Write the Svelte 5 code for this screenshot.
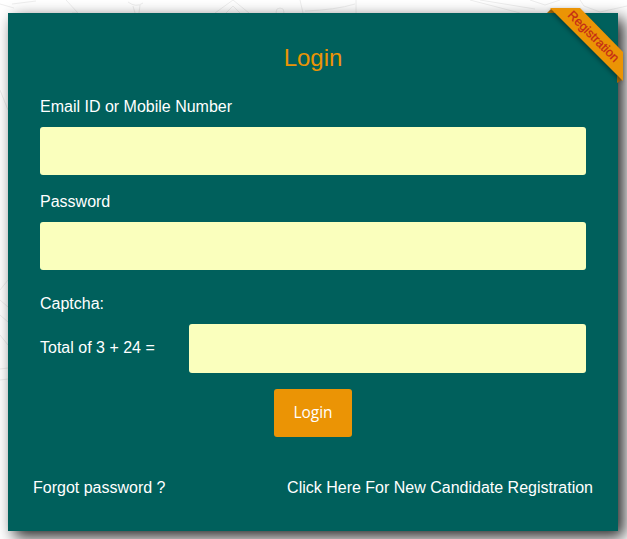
<script>
  let login = '';
  let password = '';
  let captcha = '';
</script>

<div class="page">
  <svg class="doodles" width="627" height="539" viewBox="0 0 627 539" fill="none" stroke="#eeeeee" aria-hidden="true">
    <path d="M0 4 L14 8 M12 4 L36 1 M66 0 L78 13 L72 13" />
    <path d="M128 2 Q136 8 143 3 M133 6 L135 13 M140 5 L139 13" />
    <path d="M215 13 L233 0 L249 13 M226 13 L233 6 L240 13" />
    <circle cx="280" cy="12" r="4" />
    <path d="M300 0 L303 13 M305 11 Q335 10 355 4 M356 0 L356 13" />
    <path d="M470 0 L520 13 M480 0 L535 9 M530 0 L545 5 L560 0" />
    <path d="M580 0 L584 6 L600 12 L627 6" />
    <path d="M0 290 L8 280 M0 300 L8 307 M0 315 L8 322 M0 335 L8 345 M0 369 L8 368 M0 380 L8 379" />
    <path d="M0 90 L8 110" />
  </svg>

  <form class="card" on:submit|preventDefault>
    <svg class="ribbon" width="76" height="76" viewBox="0 0 76 76" aria-hidden="true">
      <polygon points="0,5 5,0 8,5" fill="#a66a08" />
      <polygon points="70,67 75,72 70,75" fill="#a66a08" />
      <polygon class="band" points="3,0 33,0 76,44 76,73" fill="#eb9405" />
      <text x="46" y="29" transform="rotate(45 46 29)" text-anchor="middle" dominant-baseline="middle">Registration</text>
    </svg>

    <h1>Login</h1>

    <label for="login">Email ID or Mobile Number</label>
    <input id="login" type="text" bind:value={login} />

    <label for="password">Password</label>
    <input id="password" type="password" bind:value={password} />

    <label class="captcha-label" for="captcha">Captcha:</label>
    <div class="captcha-row">
      <span>Total of 3 + 24 =</span>
      <input id="captcha" type="text" bind:value={captcha} />
    </div>

    <button type="submit">Login</button>

    <div class="links">
      <a href="#forgot">Forgot password ?</a>
      <a href="#register">Click Here For New Candidate Registration</a>
    </div>
  </form>
</div>

<style>
  :global(body) {
    background: #fff;
    font-family: "Liberation Sans", Arial, sans-serif;
  }

  .page {
    position: relative;
    width: 627px;
    height: 539px;
    overflow: hidden;
    padding: 13px 9px 0 8px;
    box-sizing: border-box;
  }

  .doodles {
    position: absolute;
    top: 0;
    left: 0;
  }

  .card {
    position: relative;
    display: flex;
    flex-direction: column;
    height: 518px;
    box-sizing: border-box;
    padding: 0 32px;
    background: #00605c;
    color: #fff;
    font-size: 16px;
    box-shadow: 6px 6px 15px rgba(0, 0, 0, 0.85);
  }

  .ribbon {
    position: absolute;
    top: -5px;
    right: -5px;
    overflow: visible;
  }

  .band {
    filter: drop-shadow(-1px 2px 2px rgba(0, 0, 0, 0.35));
  }

  .ribbon text {
    font-size: 12.5px;
    fill: #c42a17;
    stroke: #c42a17;
    stroke-width: 0.25px;
  }

  h1 {
    margin: 30px 0 0;
    height: 30px;
    font-size: 24px;
    font-weight: 400;
    line-height: 30px;
    text-align: center;
    color: #eb9405;
  }

  label {
    display: block;
    height: 18px;
    line-height: 18px;
  }

  label[for="login"] {
    margin-top: 25px;
    margin-bottom: 11px;
  }

  label[for="password"] {
    margin-top: 18px;
    margin-bottom: 11px;
  }

  .captcha-label {
    margin-top: 25px;
    margin-bottom: 11px;
  }

  input {
    display: block;
    width: 100%;
    height: 48px;
    box-sizing: border-box;
    border: 0;
    border-radius: 3px;
    background: #faffbd;
    font-size: 16px;
  }

  .captcha-row {
    display: flex;
    align-items: center;
    justify-content: space-between;
  }

  .captcha-row span {
    margin-top: -2px;
  }

  .captcha-row input {
    width: 397px;
    height: 49px;
  }

  button {
    align-self: center;
    width: 78px;
    height: 48px;
    margin-top: 16px;
    padding: 0 0 2px;
    border: 0;
    border-radius: 3px;
    background: #eb9405;
    color: #fff;
    font-family: "Open Sans", sans-serif;
    font-size: 15.5px;
  }

  .links {
    display: flex;
    justify-content: space-between;
    margin: 42px -7px 0;
    line-height: 18px;
  }

  .links a {
    color: #fff;
    text-decoration: none;
  }
</style>
